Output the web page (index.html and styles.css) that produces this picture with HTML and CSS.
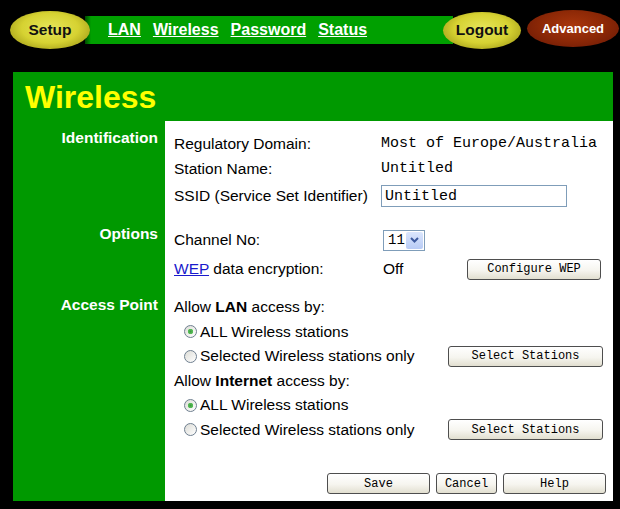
FILE: index.html
```html
<!DOCTYPE html>
<html lang="en">
<head>
  <meta charset="UTF-8">
  <title>Wireless</title>
  <link rel="stylesheet" href="styles.css">
</head>
<body>
  <div class="topbar">
    <a class="pill pill-yellow pill-setup" href="#">Setup</a>
    <div class="navbar">
      <a href="#">LAN</a>
      <a href="#">Wireless</a>
      <a href="#">Password</a>
      <a href="#">Status</a>
    </div>
    <a class="pill pill-yellow pill-logout" href="#">Logout</a>
    <a class="pill pill-red pill-advanced" href="#">Advanced</a>
  </div>

  <div class="panel">
    <h1 class="titre">Wireless</h1>

    <div class="section sec-ident">
      <div class="label">Identification</div>
      <div class="contenu">
        <div class="ligne h25"><span class="champ">Regulatory Domain:</span><span class="mono">Most of Europe/Australia</span></div>
        <div class="ligne h25"><span class="champ">Station Name:</span><span class="mono">Untitled</span></div>
        <div class="ligne h30"><span class="champ">SSID (Service Set Identifier)</span><input class="texte" type="text" value="Untitled"></div>
      </div>
    </div>

    <div class="section sec-options">
      <div class="label">Options</div>
      <div class="contenu">
        <div class="ligne h28">
          <span class="champ">Channel No:</span>
          <span class="liste"><span class="liste-val">11</span><span class="liste-fleche"><svg width="9" height="6" viewBox="0 0 9 6"><path d="M1 1 L4.5 4.5 L8 1" fill="none" stroke="#3d5a9e" stroke-width="2"/></svg></span></span>
        </div>
        <div class="ligne h30">
          <span class="champ"><a class="lien" href="#">WEP</a> data encryption:</span>
          <span class="off">Off</span>
          <button class="btn btn-wep">Configure WEP</button>
        </div>
      </div>
    </div>

    <div class="section sec-acces">
      <div class="label">Access Point</div>
      <div class="contenu">
        <div class="ligne h24">Allow&nbsp;<b>LAN</b>&nbsp;access by:</div>
        <div class="ligne h24"><label class="choix"><input type="radio" name="lan" checked>ALL Wireless stations</label></div>
        <div class="ligne h24"><label class="choix"><input type="radio" name="lan">Selected Wireless stations only</label><button class="btn btn-sel">Select Stations</button></div>
        <div class="ligne h24">Allow&nbsp;<b>Internet</b>&nbsp;access by:</div>
        <div class="ligne h24"><label class="choix"><input type="radio" name="net" checked>ALL Wireless stations</label></div>
        <div class="ligne h24"><label class="choix"><input type="radio" name="net">Selected Wireless stations only</label><button class="btn btn-sel">Select Stations</button></div>
        <div class="actions">
          <button class="btn btn-large">Save</button>
          <button class="btn btn-cancel">Cancel</button>
          <button class="btn btn-large">Help</button>
        </div>
      </div>
    </div>
  </div>
</body>
</html>
```

FILE: styles.css
```css
body {
  margin: 0;
  background-color: #000;
  font-family: "Liberation Sans", Arial, sans-serif;
  font-size: 15.5px;
  color: #000;
}

/* barre du haut */
.topbar {
  display: flex;
  align-items: center;
  height: 60px;
  padding-left: 10px;
}

.pill {
  display: flex;
  align-items: center;
  justify-content: center;
  border-radius: 50%;
  font-weight: bold;
  text-decoration: none;
  z-index: 2;
}

.pill-yellow {
  color: #111;
  font-size: 15.5px;
  background: radial-gradient(ellipse at 50% 45%, #e6e65a 0%, #d6d232 50%, #aaa41c 80%, #d8d68a 94%, #8a8420 100%);
}

.pill-setup {
  width: 80px;
  height: 38px;
}

.pill-logout {
  width: 78px;
  height: 37px;
  margin-left: -10px;
}

.pill-red {
  color: #fff;
  font-size: 13px;
  background: radial-gradient(ellipse at 50% 42%, #a8360c 0%, #8c2806 50%, #7a2006 74%, #d08a70 90%, #6a1a04 100%);
}

.pill-advanced {
  width: 92px;
  height: 37px;
  margin-left: 6px;
  margin-top: -3px;
}

.navbar {
  display: flex;
  align-items: center;
  gap: 12px;
  width: 345px;
  height: 28px;
  margin-left: -5px;
  padding-left: 23px;
  background: linear-gradient(to right, #004a00 0px, #00a000 6px, #00a000 100%);
  z-index: 1;
}

.navbar a {
  color: #fff;
  font-size: 16px;
  font-weight: bold;
}

/* panneau principal */
.panel {
  width: 600px;
  margin: 12px 0 0 13px;
  background-color: #009900;
}

.titre {
  margin: 0;
  height: 49px;
  padding-left: 12px;
  line-height: 51px;
  font-size: 32px;
  color: #ffff00;
}

.section {
  display: grid;
  grid-template-columns: 152px 448px;
}

.label {
  padding-right: 7px;
  text-align: right;
  color: #fff;
  font-weight: bold;
  font-size: 15.5px;
  line-height: 18px;
}

.contenu {
  background-color: #fff;
  padding-left: 9px;
}

.sec-ident .label { padding-top: 8px; }
.sec-ident .contenu { padding: 10px 0 11px 9px; }

.sec-options .label { padding-top: 3px; }
.sec-options .contenu { padding: 4px 0 6px 9px; }

.sec-acces .label { padding-top: 6px; }
.sec-acces .contenu { padding: 5px 0 7px 9px; }

.ligne {
  display: flex;
  align-items: center;
  white-space: nowrap;
}

.h24 { height: 24.5px; }
.h25 { height: 25px; }
.h28 { height: 28px; }
.h30 { height: 30px; }

.champ {
  width: 207px;
}

.mono {
  font-family: "Liberation Mono", "Courier New", monospace;
  font-size: 15px;
}

.texte {
  box-sizing: border-box;
  width: 186px;
  height: 22px;
  margin: 0;
  padding: 0 3px;
  border: 1px solid #7f9db9;
  font-family: "Liberation Mono", "Courier New", monospace;
  font-size: 15px;
}

.liste {
  display: flex;
  align-items: center;
  box-sizing: border-box;
  width: 42px;
  height: 21px;
  margin-left: 2px;
  padding: 1px;
  border: 1px solid #7f9db9;
  background-color: #fff;
}

.liste-val {
  flex: 1;
  padding-left: 3px;
  font-family: "Liberation Mono", "Courier New", monospace;
  font-size: 14px;
}

.liste-fleche {
  display: flex;
  align-items: center;
  justify-content: center;
  width: 17px;
  height: 17px;
  border-radius: 2px;
  background: linear-gradient(#dbe6fd, #b8cbf5);
}

.lien {
  color: #1a1acc;
}

.off {
  width: 84px;
  padding-left: 2px;
}

.btn {
  box-sizing: border-box;
  height: 21px;
  padding: 0;
  border: 1px solid #4e4e4e;
  border-radius: 3px;
  background: linear-gradient(#ffffff, #f6f5ef 55%, #e2dfd0);
  font-family: "Liberation Mono", "Courier New", monospace;
  font-size: 12px;
  color: #000;
}

.btn-wep { width: 134px; }
.btn-sel { width: 155px; }
.btn-large { width: 103px; }
.btn-cancel { width: 61px; }

.choix {
  display: flex;
  align-items: center;
  width: 264px;
  padding-left: 10px;
}

.choix input {
  appearance: none;
  width: 13px;
  height: 13px;
  margin: 0 3px 0 0;
  border: 1px solid #6f7f90;
  border-radius: 50%;
  background: linear-gradient(135deg, #dcdcd6, #ffffff);
}

.choix input:checked {
  background: radial-gradient(circle, #3f9b3f 0, #5cc05c 2.5px, transparent 3px), linear-gradient(135deg, #dcdcd6, #ffffff);
}

.actions {
  display: flex;
  justify-content: flex-end;
  gap: 6px;
  margin-top: 31px;
  padding-right: 7px;
}
```
